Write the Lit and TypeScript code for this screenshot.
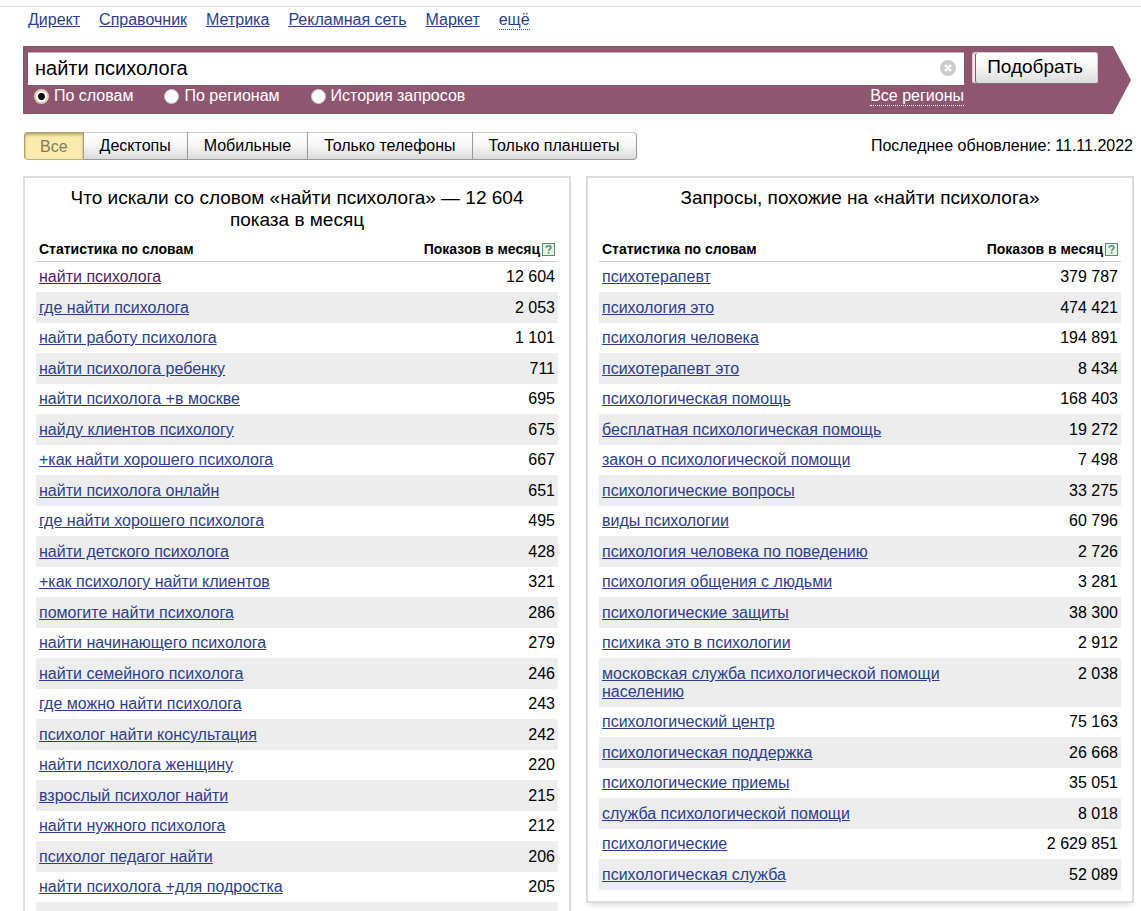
import { LitElement, html, css } from "lit";
import { customElement, property, state } from "lit/decorators.js";

interface Row {
  phrase: string;
  count: string;
  visited?: boolean;
}

const parse = (lines: string): Row[] =>
  lines
    .trim()
    .split("\n")
    .map((line) => {
      const [phrase, count] = line.trim().split("|");
      return { phrase, count };
    });

const included: Row[] = [
  { phrase: "найти психолога", count: "12 604", visited: true },
  ...parse(`
    где найти психолога|2 053
    найти работу психолога|1 101
    найти психолога ребенку|711
    найти психолога +в москве|695
    найду клиентов психологу|675
    +как найти хорошего психолога|667
    найти психолога онлайн|651
    где найти хорошего психолога|495
    найти детского психолога|428
    +как психологу найти клиентов|321
    помогите найти психолога|286
    найти начинающего психолога|279
    найти семейного психолога|246
    где можно найти психолога|243
    психолог найти консультация|242
    найти психолога женщину|220
    взрослый психолог найти|215
    найти нужного психолога|212
    психолог педагог найти|206
    найти психолога +для подростка|205
  `),
  { phrase: "", count: "" },
];

const similar: Row[] = parse(`
  психотерапевт|379 787
  психология это|474 421
  психология человека|194 891
  психотерапевт это|8 434
  психологическая помощь|168 403
  бесплатная психологическая помощь|19 272
  закон о психологической помощи|7 498
  психологические вопросы|33 275
  виды психологии|60 796
  психология человека по поведению|2 726
  психология общения с людьми|3 281
  психологические защиты|38 300
  психика это в психологии|2 912
  московская служба психологической помощи населению|2 038
  психологический центр|75 163
  психологическая поддержка|26 668
  психологические приемы|35 051
  служба психологической помощи|8 018
  психологические|2 629 851
  психологическая служба|52 089
`);

@customElement("stats-panel")
export class StatsPanel extends LitElement {
  @property() heading = "";
  @property({ attribute: false }) rows: Row[] = [];

  static styles = css`
    :host {
      display: block;
      box-sizing: border-box;
      border: 2px solid #dcdcdc;
      padding: 9px 11px 11px;
      background: #fff;
      box-shadow: 0 5px 5px -3px rgba(0, 0, 0, 0.15);
    }
    .title {
      margin: 0;
      padding: 0 20px;
      min-height: 44px;
      font-size: 19px;
      line-height: 22px;
      font-weight: normal;
      text-align: center;
    }
    .table {
      width: 100%;
      table-layout: fixed;
      border-collapse: separate;
      border-spacing: 0;
    }
    .head {
      height: 24px;
      padding: 6px 3px 0;
      font-size: 14px;
      line-height: 18px;
      text-align: left;
      white-space: nowrap;
      border-bottom: 1px solid #ccc;
    }
    .head-count {
      width: 150px;
      text-align: right;
    }
    .head-line {
      display: flex;
      justify-content: flex-end;
      align-items: center;
      gap: 2px;
    }
    .help {
      display: flex;
      padding: 0;
      border: 0;
      background: none;
    }
    .cell {
      height: 18px;
      padding: 6px 3px;
      vertical-align: top;
      line-height: 18px;
    }
    .row:nth-child(even) .cell {
      padding-top: 7px;
      background: #ededed;
    }
    .count {
      text-align: right;
      white-space: nowrap;
    }
    .link {
      color: #2c3e94;
    }
    .visited {
      color: #551a6b;
    }
  `;

  render() {
    return html`
      <h2 class="title">${this.heading}</h2>
      <table class="table">
        <thead>
          <tr>
            <th class="head" scope="col">Статистика по словам</th>
            <th class="head head-count" scope="col">
              <span class="head-line"
                >Показов в месяц<button class="help" type="button" aria-label="Справка">
                  <svg width="13" height="13" viewBox="0 0 13 13">
                    <rect x="0.5" y="0.5" width="12" height="12" fill="#e6f3ea" stroke="#5a8c6c" />
                    <path
                      d="M4 4.8C4 3.4 5 2.8 6.5 2.8S9 3.5 9 4.6C9 6 6.6 6.2 6.6 8"
                      fill="none"
                      stroke="#5a8c6c"
                      stroke-width="1.5"
                    />
                    <rect x="5.8" y="9" width="1.6" height="1.6" fill="#5a8c6c" />
                  </svg></button
              ></span>
            </th>
          </tr>
        </thead>
        <tbody>
          ${this.rows.map(
            (r) => html`<tr class="row">
              <td class="cell">
                ${r.phrase
                  ? html`<a class="link ${r.visited ? "visited" : ""}" href="#">${r.phrase}</a>`
                  : ""}
              </td>
              <td class="cell count">${r.count}</td>
            </tr>`
          )}
        </tbody>
      </table>
    `;
  }
}

@customElement("app-root")
export class AppRoot extends LitElement {
  @state() private device = "Все";
  @state() private query = "найти психолога";

  static styles = css`
    :host {
      display: block;
      box-sizing: border-box;
      height: 100vh;
      overflow: hidden;
      padding: 6px 0 0;
      background: #fff;
      color: #000;
      font: 16px/18px "Liberation Sans", Arial, sans-serif;
    }
    .nav {
      display: flex;
      gap: 19px;
      padding: 4px 28px 16px;
      border-top: 1px solid #ddd;
    }
    .nav-link {
      height: 18px;
      color: #2c3e94;
    }
    .more {
      text-decoration: none;
      border-bottom: 1px dotted #2c3e94;
    }
    .search {
      display: grid;
      grid-template-columns: 1fr 126px;
      column-gap: 8px;
      margin: 0 10px 0 23px;
      padding: 6px 33px 7px 5px;
      background: #8f576f;
      clip-path: polygon(0 0, calc(100% - 18px) 0, 100% 50%, calc(100% - 18px) 100%, 0 100%);
    }
    .field {
      display: flex;
      align-items: center;
      box-sizing: border-box;
      height: 33px;
      padding: 0 8px 2px 7px;
      background: #fff;
      border-top: 1px solid #c4aab6;
    }
    .query {
      flex: 1;
      min-width: 0;
      padding: 0;
      border: 0;
      outline: 0;
      background: none;
      color: #000;
      font: 20px/24px "Liberation Sans", Arial, sans-serif;
    }
    .clear {
      display: flex;
      padding: 0;
      border: 0;
      background: none;
    }
    .submit {
      height: 32px;
      padding: 0 0 2px;
      border: 1px solid #d8c8cf;
      border-bottom-color: #777;
      border-radius: 3px;
      background: linear-gradient(#fff, #fafafa 40%, #dcdcdc);
      box-shadow: inset 2px 0 0 0 #f3e6ec, inset 3px 0 0 0 #8f576f;
      color: #000;
      font: 19px/24px "Liberation Sans", Arial, sans-serif;
    }
    .options {
      display: flex;
      align-items: center;
      gap: 31px;
      height: 22px;
      padding-left: 6px;
      color: #fff;
    }
    .option {
      display: flex;
      align-items: center;
      gap: 5px;
    }
    .radio {
      appearance: none;
      box-sizing: border-box;
      width: 15px;
      height: 15px;
      margin: 0;
      border: 1px solid #cfc4c9;
      border-radius: 50%;
      background: #fff;
    }
    .radio:checked {
      border: 2px solid #e5cdb0;
      background: radial-gradient(circle, #000 3px, #fff 4px);
    }
    .regions {
      margin-left: auto;
      color: #fff;
      text-decoration: none;
      border-bottom: 1px dotted #fff;
    }
    .toolbar {
      display: flex;
      align-items: center;
      justify-content: space-between;
      padding: 18px 8px 16px 24px;
    }
    .tabs {
      display: flex;
    }
    .tab {
      box-sizing: border-box;
      height: 28px;
      margin: 0;
      padding: 0 16px 1px;
      border: 1px solid #999;
      border-top-color: #ccc;
      border-left-width: 0;
      background: linear-gradient(#fff, #f8f8f8 45%, #dadada);
      color: #000;
      font: 16px/18px "Liberation Sans", Arial, sans-serif;
    }
    .tab:first-child {
      border-left-width: 1px;
      border-radius: 4px 0 0 4px;
    }
    .tab:last-child {
      border-radius: 0 4px 4px 0;
    }
    .active {
      padding: 2px 15px 0;
      border-color: #a89c72 #a89c72 #b9b08c;
      background: #fdebae;
      box-shadow: inset 0 2px 3px rgba(110, 90, 30, 0.45);
      color: #857b58;
    }
    .panels {
      display: grid;
      grid-template-columns: 1fr 1fr;
      align-items: start;
      gap: 15px;
      padding: 0 7px 20px 23px;
    }
  `;

  render() {
    const links = ["Директ", "Справочник", "Метрика", "Рекламная сеть", "Маркет"];
    const modes = ["По словам", "По регионам", "История запросов"];
    const devices = ["Все", "Десктопы", "Мобильные", "Только телефоны", "Только планшеты"];
    return html`
      <nav class="nav">
        ${links.map((l) => html`<a class="nav-link" href="#">${l}</a>`)}
        <a class="nav-link more" href="#">ещё</a>
      </nav>
      <form class="search" @submit=${(e: Event) => e.preventDefault()}>
        <div class="field">
          <input
            class="query"
            type="text"
            aria-label="Запрос"
            .value=${this.query}
            @input=${(e: Event) => (this.query = (e.target as HTMLInputElement).value)}
          />
          <button class="clear" type="button" aria-label="Очистить" @click=${() => (this.query = "")}>
            <svg width="16" height="16" viewBox="0 0 16 16">
              <circle cx="8" cy="8" r="8" fill="#ccc" />
              <path d="M5 5l6 6M11 5l-6 6" stroke="#fff" stroke-width="2.4" />
            </svg>
          </button>
        </div>
        <button class="submit" type="submit">Подобрать</button>
        <div class="options">
          ${modes.map(
            (m, i) => html`<label class="option"
              ><input class="radio" type="radio" name="mode" ?checked=${i === 0} />${m}</label
            >`
          )}
          <a class="regions" href="#">Все регионы</a>
        </div>
      </form>
      <div class="toolbar">
        <div class="tabs">
          ${devices.map(
            (d) => html`<button
              class="tab ${d === this.device ? "active" : ""}"
              type="button"
              @click=${() => (this.device = d)}
            >
              ${d}
            </button>`
          )}
        </div>
        <span>Последнее обновление: 11.11.2022</span>
      </div>
      <main class="panels">
        <stats-panel
          heading="Что искали со словом «найти психолога» — 12 604 показа в месяц"
          .rows=${included}
        ></stats-panel>
        <stats-panel heading="Запросы, похожие на «найти психолога»" .rows=${similar}></stats-panel>
      </main>
    `;
  }
}
